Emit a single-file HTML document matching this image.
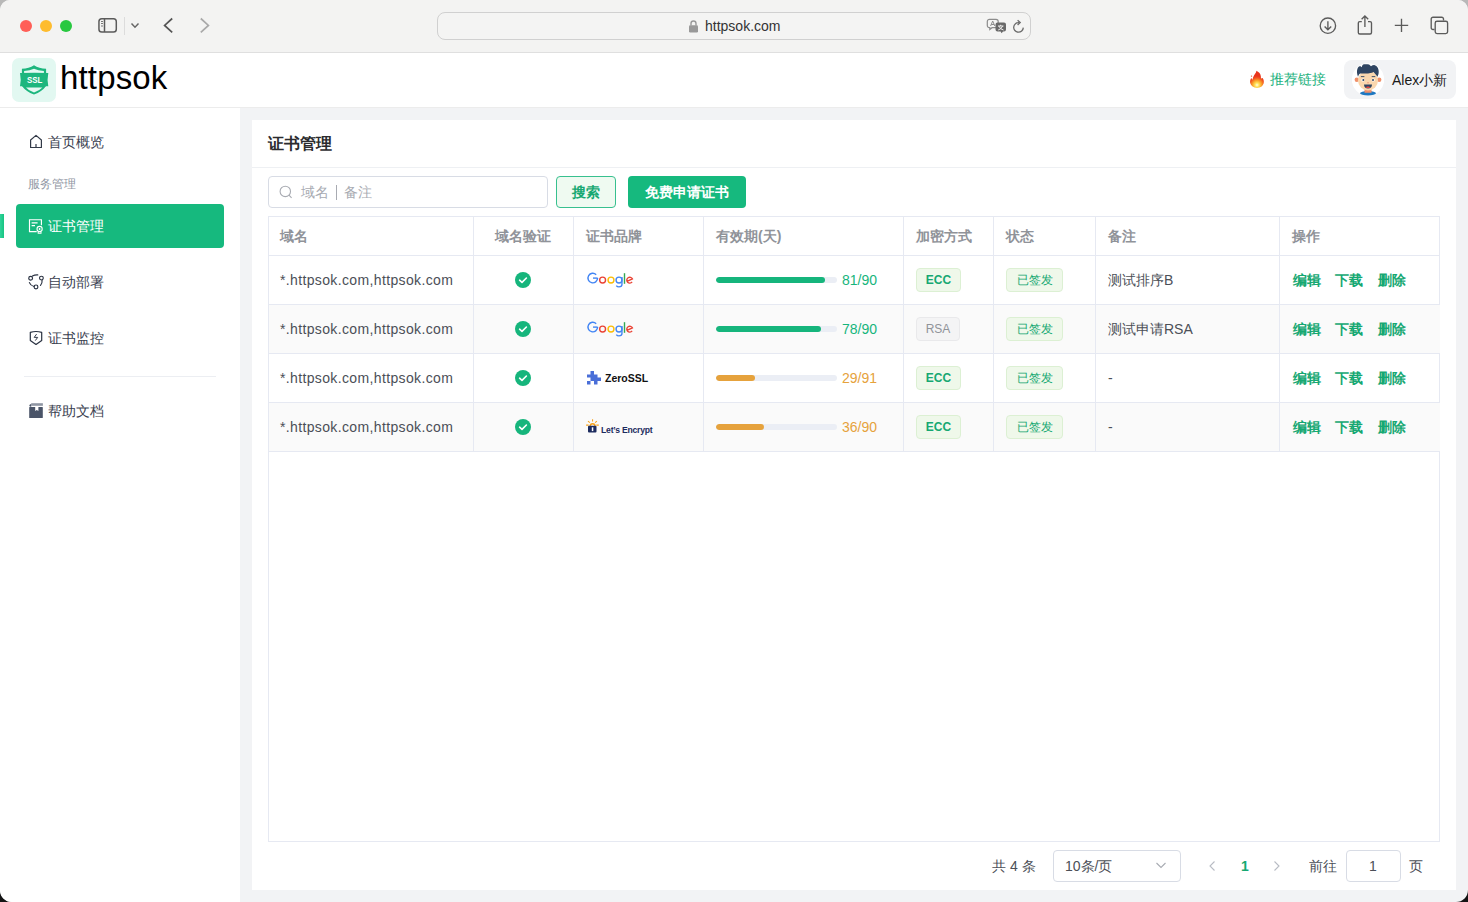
<!DOCTYPE html>
<html><head><meta charset="utf-8">
<style>
*{box-sizing:border-box;margin:0;padding:0}
html,body{width:1468px;height:902px;overflow:hidden;background:linear-gradient(#b8b8b8 0,#b8b8b8 450px,#141414 451px)}
body{font-family:"Liberation Sans",sans-serif;position:relative;color:#333}
.abs{position:absolute}
.t{position:absolute;white-space:nowrap;line-height:1}
#win{position:absolute;left:0;top:0;width:1468px;height:902px;border-radius:10px 10px 12px 12px;overflow:hidden;background:#f2f3f5}
#tb{position:absolute;left:0;top:0;width:1468px;height:53px;background:#f3f3f2;border-bottom:1px solid #dfdfdf}
.tl{position:absolute;top:20px;width:12px;height:12px;border-radius:50%}
#url{position:absolute;left:437px;top:12px;width:594px;height:28px;border:1px solid #d0d0d0;border-radius:8px;background:#f4f4f3}
#hdr{position:absolute;left:0;top:53px;width:1468px;height:55px;background:#fff;border-bottom:1px solid #ececec}
#side{position:absolute;left:0;top:108px;width:240px;height:794px;background:#fff}
#card{position:absolute;left:252px;top:120px;width:1204px;height:770px;background:#fff}
.nav{position:absolute;left:48px;font-size:14px;color:#3a4150}
.navic{position:absolute;left:28px;width:16px;height:16px}
.th{position:absolute;top:229px;font-size:14px;font-weight:bold;color:#909399}
.row{position:absolute;left:268px;width:1172px;height:49px;border-bottom:1px solid #e6e9f2}
.dom{position:absolute;left:280px;font-size:14px;color:#4b4f57;letter-spacing:0.36px}
.vl{position:absolute;top:216px;width:1px;height:235px;background:#e6e9f2}
.bar{position:absolute;left:716px;width:121px;height:6px;border-radius:3px;background:#ebeef5;overflow:hidden}
.bar i{position:absolute;left:0;top:0;height:6px;border-radius:3px;display:block}
.num{position:absolute;left:842px;font-size:14px}
.tag{position:absolute;height:24px;border-radius:4px;font-size:12px;line-height:22px;text-align:center}
.tg{background:#eff8ea;border:1px solid #dcf0d3;color:#16a872}
.act{position:absolute;font-size:14px;font-weight:bold;color:#16a872}
.chk{position:absolute;left:515px;width:16px;height:16px}
</style></head><body>
<div id="win">
  <!-- Safari toolbar -->
  <div id="tb">
    <div class="tl" style="left:20px;background:#ff5f57"></div>
    <div class="tl" style="left:40px;background:#febc2e"></div>
    <div class="tl" style="left:60px;background:#28c840"></div>
    <svg class="abs" style="left:96px;top:15px" width="24" height="21" viewBox="0 0 24 21">
      <rect x="2.95" y="3.65" width="17.35" height="13.4" rx="2.8" fill="none" stroke="#5b5b5b" stroke-width="1.5"/>
      <line x1="8.5" y1="3.65" x2="8.5" y2="17.05" stroke="#5b5b5b" stroke-width="1.5"/>
      <rect x="5" y="6" width="2" height="1" fill="#777"/><rect x="5" y="8" width="2" height="1" fill="#777"/><rect x="5" y="10.5" width="2" height="1" fill="#777"/>
    </svg>
    <div class="abs" style="left:124px;top:17px;width:1px;height:18px;background:#dcdcdc"></div>
    <svg class="abs" style="left:129px;top:21px" width="12" height="9" viewBox="0 0 12 9"><path d="M2.5 2.6 L6 6.2 L9.5 2.6" fill="none" stroke="#666" stroke-width="1.5"/></svg>
    <svg class="abs" style="left:160px;top:15px" width="16" height="21" viewBox="0 0 16 21"><path d="M12.2 3.5 L4.6 10.4 L12.2 17.3" fill="none" stroke="#555" stroke-width="1.7"/></svg>
    <svg class="abs" style="left:197px;top:15px" width="16" height="21" viewBox="0 0 16 21"><path d="M3.8 3.5 L11.4 10.4 L3.8 17.3" fill="none" stroke="#a9a9a9" stroke-width="1.7"/></svg>
    <div id="url"></div>
    <svg class="abs" style="left:688px;top:19px" width="11" height="14" viewBox="0 0 11 14"><path d="M3 6.5 V4.5 A2.5 2.5 0 0 1 8 4.5 V6.5" fill="none" stroke="#999" stroke-width="1.4"/><rect x="1" y="6.3" width="9" height="7.2" rx="1.3" fill="#999"/></svg>
    <div class="t" style="left:705px;top:19px;font-size:14px;color:#333">httpsok.com</div>
    <svg class="abs" style="left:986px;top:18px" width="22" height="17" viewBox="0 0 22 17">
      <path d="M3.5 1.3 H10 A2.2 2.2 0 0 1 12.2 3.5 V7.5 A2.2 2.2 0 0 1 10 9.7 H6 L3.8 11.5 V9.7 H3.5 A2.2 2.2 0 0 1 1.3 7.5 V3.5 A2.2 2.2 0 0 1 3.5 1.3 Z" fill="none" stroke="#8c8c8c" stroke-width="1.2"/>
      <path d="M4.6 8 L6.7 3 L8.8 8 M5.3 6.5 H8.1" fill="none" stroke="#8c8c8c" stroke-width="1"/>
      <path d="M11.5 4.6 H18 A2 2 0 0 1 20 6.6 V11.6 A2 2 0 0 1 18 13.6 H17 L15.6 15.2 L14.6 13.6 H11.5 A2 2 0 0 1 9.5 11.6 V6.6 A2 2 0 0 1 11.5 4.6 Z" fill="#696969"/>
      <path d="M12 8 H17.5 M14.7 6.8 V8 M12.8 8 Q14.5 11.5 17.5 12 M16.7 8 Q15.2 11.3 12.2 12" fill="none" stroke="#f3f2f1" stroke-width="0.95"/>
    </svg>
    <svg class="abs" style="left:1011px;top:18px" width="16" height="18" viewBox="0 0 16 18"><path d="M12.3 9.6 A4.8 4.8 0 1 1 8 4.6" fill="none" stroke="#6a6a6a" stroke-width="1.3"/><path d="M6.6 2.3 L9.2 4.6 L6.6 6.9" fill="none" stroke="#6a6a6a" stroke-width="1.3"/></svg>
    <!-- right icons -->
    <svg class="abs" style="left:1317px;top:15px" width="22" height="22" viewBox="0 0 22 22"><circle cx="10.9" cy="10.7" r="7.7" fill="none" stroke="#5b5b5b" stroke-width="1.35"/><path d="M10.9 6.2 V14.6 M7.6 11.4 L10.9 14.7 L14.2 11.4" fill="none" stroke="#5b5b5b" stroke-width="1.35"/></svg>
    <svg class="abs" style="left:1355px;top:13px" width="20" height="23" viewBox="0 0 20 23"><path d="M6.8 8.6 H4.8 A1.5 1.5 0 0 0 3.3 10.1 V19.5 A1.5 1.5 0 0 0 4.8 21 H15 A1.5 1.5 0 0 0 16.5 19.5 V10.1 A1.5 1.5 0 0 0 15 8.6 H13" fill="none" stroke="#5b5b5b" stroke-width="1.35"/><path d="M9.9 14 V3 M6.6 6.2 L9.9 2.9 L13.2 6.2" fill="none" stroke="#5b5b5b" stroke-width="1.35"/></svg>
    <svg class="abs" style="left:1393px;top:17px" width="17" height="17" viewBox="0 0 17 17"><path d="M8.5 1.8 V15 M1.8 8.4 H15.2" fill="none" stroke="#5b5b5b" stroke-width="1.35"/></svg>
    <svg class="abs" style="left:1429px;top:15px" width="21" height="21" viewBox="0 0 21 21"><path d="M5.5 14.5 H4 A1.8 1.8 0 0 1 2.2 12.7 V4 A1.8 1.8 0 0 1 4 2.2 H12.7 A1.8 1.8 0 0 1 14.5 4 V5.5" fill="none" stroke="#5b5b5b" stroke-width="1.35"/><rect x="6.2" y="6.2" width="12.4" height="12.4" rx="1.8" fill="none" stroke="#5b5b5b" stroke-width="1.35"/></svg>
  </div>

  <!-- App header -->
  <div id="hdr">
    <div class="abs" style="left:12px;top:5px;width:44px;height:44px;border-radius:7px;background:#e2f8f1"></div>
    <svg class="abs" style="left:12px;top:5px" width="44" height="44" viewBox="0 0 44 44">
      <path d="M9.9 10.8 Q17 10.6 22 7.2 Q27 10.6 34.1 10.8 V28 Q30 33.6 22 36.6 Q14 33.6 9.9 28 Z" fill="#1db67e"/>
      <path d="M12.1 15.2 V12.9 Q18 12.7 22 10.7 Q26 12.7 31.9 12.9 V15.2 Z" fill="#e6f9f3"/>
      <path d="M8 15 Q22 14.3 36.3 15 Q34.9 21.6 36.3 28.3 Q22 27.6 8 28.3 Q9.4 21.6 8 15 Z" fill="#1db67e"/>
      <path d="M14 29.6 H30.4 Q27.6 32.6 22 34.6 Q16.4 32.6 14 29.6 Z" fill="#e6f9f3"/>
      <text x="14.9" y="24.8" font-family="Liberation Sans" font-weight="bold" font-size="9.2" fill="#fff" textLength="15.3" lengthAdjust="spacingAndGlyphs">SSL</text>
    </svg>
    <div class="t" style="left:60px;top:8px;font-size:33px;color:#000;letter-spacing:0.15px">httpsok</div>
        <svg class="abs" style="left:1249px;top:17px" width="16" height="19" viewBox="0 0 16 19">
      <defs><radialGradient id="fg" cx="8" cy="15" r="9" gradientUnits="userSpaceOnUse"><stop offset="0" stop-color="#fffde8"/><stop offset="0.22" stop-color="#ffe45c"/><stop offset="0.5" stop-color="#fba32a"/><stop offset="0.8" stop-color="#f2521f"/><stop offset="1" stop-color="#e9341c"/></radialGradient></defs>
      <path d="M7.4 0.8 C9.5 2 11.6 3.5 11.8 6 L12 8.4 L13.6 7.9 C14.8 9.5 15.2 11.5 14.6 13.5 C13.8 16 11.5 17.9 8 17.9 C4.5 17.9 2 16 1.2 13 C0.8 11.3 1.3 9.5 2.2 8 L3.6 9.8 C3.8 7.5 4.8 5.8 5.6 4.6 C6.5 3.3 7.3 2.2 7.4 0.8 Z" fill="url(#fg)"/>
      <circle cx="2.5" cy="6.1" r="0.7" fill="#f04a1e"/>
    </svg>
    <div class="t" style="left:1270px;top:19px;font-size:14px;color:#1db27e">推荐链接</div>
    <div class="abs" style="left:1344px;top:7px;width:112px;height:39px;border-radius:8px;background:#f2f3f5"></div>
    <svg class="abs" style="left:1352px;top:10px" width="32" height="34" viewBox="0 0 32 34">
      <circle cx="16" cy="16.5" r="16.2" fill="#fff"/>
      <circle cx="4.8" cy="16.8" r="2.2" fill="#f0906a"/><circle cx="27.2" cy="16.8" r="2.2" fill="#f0906a"/>
      <path d="M12.5 24 H19.5 V29 H12.5 Z" fill="#f0906a"/>
      <ellipse cx="16" cy="30.3" rx="8" ry="2.2" fill="#1f78c1"/>
      <path d="M12.5 28 H19.5 V29.8 H12.5 Z" fill="#f0906a"/>
      <ellipse cx="16" cy="17.5" rx="10" ry="10" fill="#fad7ae"/>
      <path d="M6 13.7 C5 11 4.6 8.5 5.3 6.2 C5.8 4.6 6.8 3.3 8.1 3 L9.7 4.3 C10 3 10.5 1.8 11.1 1.4 C13 1.1 15.5 1.2 17.1 1.6 L19 3.2 C20 2.6 21 2.1 22.2 2.1 C23.8 2.8 25 3.5 25.6 4.6 C26.7 6.5 27 9 26.5 11 L25.5 13.7 C24.2 12 22.8 10.3 21.5 9 C19.5 10 17.5 10.4 16 10.4 L8.1 10.4 C7.2 11 6.5 12 6 13.7 Z" fill="#2f4562"/>
      <path d="M9.3 13.6 H12 M20.1 13.6 H22.9" stroke="#2f4562" stroke-width="0.9" stroke-linecap="round"/>
      <circle cx="11" cy="17" r="1.6" fill="#fff"/><circle cx="21.2" cy="17" r="1.6" fill="#fff"/>
      <circle cx="11.3" cy="17" r="1" fill="#2f4562"/><circle cx="21" cy="17" r="1" fill="#2f4562"/>
      <circle cx="16" cy="19.8" r="0.7" fill="#f08a70"/>
      <path d="M12 21.6 H20 C20 24 18.5 25.6 16 25.6 C13.5 25.6 12 24 12 21.6 Z" fill="#2f4562"/>
      <path d="M13.5 24.3 C14.5 23.2 17.5 23.2 18.5 24.3 C17.8 25.2 14.2 25.2 13.5 24.3 Z" fill="#e8413e"/>
    </svg>
    <div class="t" style="left:1392px;top:20px;font-size:14px;color:#1a1a1a">Alex小新</div>
  </div>

  <!-- Sidebar -->
  <div id="side"></div>
  <svg class="navic" style="left:28px;top:133px" width="16" height="16" viewBox="0 0 16 16"><path d="M2.6 14.5 V7 L8 2.4 L13.4 7 V14.5 Z M8 14.5 V11" fill="none" stroke="#333a48" stroke-width="1.2" stroke-linejoin="round"/></svg>
  <div class="t nav" style="top:135px">首页概览</div>
  <div class="t" style="left:28px;top:178px;font-size:12px;color:#8f96a3">服务管理</div>
  <div class="abs" style="left:0;top:214px;width:4px;height:24px;background:linear-gradient(90deg,#30d49a,#17c482)"></div>
  <div class="abs" style="left:16px;top:204px;width:208px;height:44px;border-radius:4px;background:#16b97e"></div>
  <svg class="navic" style="left:28px;top:218px" width="16" height="16" viewBox="0 0 16 16"><path d="M8.7 13.6 H1.5 V1.7 H13.4 V7.2" fill="none" stroke="#fff" stroke-width="1.15"/><path d="M3.6 4.8 H9.6 M3.6 7.6 H7" stroke="#fff" stroke-width="1.15"/><circle cx="11.6" cy="11" r="2.6" fill="none" stroke="#fff" stroke-width="1.1"/><circle cx="11.6" cy="11" r="0.9" fill="#fff"/><path d="M10.2 13.4 V15.2 H13 V13.4" fill="none" stroke="#fff" stroke-width="1.05"/></svg>
  <div class="t nav" style="top:219px;color:#fff">证书管理</div>
  <svg class="navic" style="left:28px;top:274px" width="16" height="16" viewBox="0 0 16 16"><circle cx="2.65" cy="4.25" r="1.9" fill="none" stroke="#2a3242" stroke-width="1.15"/><circle cx="13.4" cy="4.1" r="1.9" fill="none" stroke="#2a3242" stroke-width="1.15"/><circle cx="8" cy="12.9" r="1.9" fill="none" stroke="#2a3242" stroke-width="1.15"/><path d="M4.4 2 Q6.8 0.7 9.8 0.9 M1.4 8.6 Q2.4 11.4 6 12.5 M14.1 6.1 Q14.4 9.3 12.5 11.3" fill="none" stroke="#2a3242" stroke-width="1.15" stroke-linecap="round"/></svg>
  <div class="t nav" style="top:275px">自动部署</div>
  <svg class="navic" style="left:28px;top:330px" width="16" height="16" viewBox="0 0 16 16"><path d="M2.3 2.4 Q8 0.6 13.7 2.4 V10.4 L8 14.5 L2.3 10.4 Z" fill="none" stroke="#2a3242" stroke-width="1.2" stroke-linejoin="round"/><path d="M8.6 4.1 L6.2 7.4 H9.7 L7.3 10.6" fill="none" stroke="#2a3242" stroke-width="0.95" stroke-linejoin="round"/></svg>
  <div class="t nav" style="top:331px">证书监控</div>
  <div class="abs" style="left:24px;top:376px;width:192px;height:1px;background:#eceef2"></div>
  <svg class="navic" style="left:28px;top:403px" width="16" height="16" viewBox="0 0 16 16"><rect x="3.2" y="0.2" width="11.7" height="2.6" fill="#8f96a3"/><path d="M1.2 3 Q1.5 1 3.2 1 V3.9 Z" fill="#4a5468"/><rect x="1.2" y="3.9" width="13.6" height="11.1" rx="0.6" fill="#4a5468"/><path d="M7.2 3.9 H10.4 V8 L8.8 7 L7.2 8 Z" fill="#fff"/></svg>
  <div class="t nav" style="top:404px">帮助文档</div>

  <!-- Card -->
  <div id="card"></div>
  <div class="t" style="left:268px;top:136px;font-size:16px;color:#2b2b2e;font-weight:600">证书管理</div>
  <div class="abs" style="left:252px;top:167px;width:1204px;height:1px;background:#eef0f3"></div>
  <div class="abs" style="left:268px;top:176px;width:280px;height:32px;border:1px solid #d8dce5;border-radius:4px;background:#fff"></div>
  <svg class="abs" style="left:278px;top:184px" width="16" height="16" viewBox="0 0 16 16"><circle cx="7.3" cy="7.4" r="5.2" fill="none" stroke="#a8abb2" stroke-width="1.1"/><path d="M11 11.2 L13.6 13.8" stroke="#a8abb2" stroke-width="1.1"/></svg>
  <div class="t" style="left:301px;top:185px;font-size:14px;color:#a8abb2">域名</div><div class="abs" style="left:336px;top:185px;width:1px;height:15px;background:#a8abb2"></div><div class="t" style="left:344px;top:185px;font-size:14px;color:#a8abb2">备注</div>
  <div class="abs" style="left:556px;top:176px;width:60px;height:32px;border:1px solid #38c08f;border-radius:4px;background:#effaf1"></div>
  <div class="t" style="left:572px;top:185px;font-size:14px;color:#16a872;font-weight:bold">搜索</div>
  <div class="abs" style="left:628px;top:176px;width:118px;height:32px;border-radius:4px;background:#16b97e"></div>
  <div class="t" style="left:645px;top:185px;font-size:14px;color:#fff;font-weight:bold">免费申请证书</div>

  <!-- Table -->
  <div class="abs" style="left:268px;top:216px;width:1172px;height:626px;border:1px solid #e6e9f2;background:#fff"></div>
  <div class="row" style="top:216px;height:40px"></div>
  <div class="row" style="top:256px"></div>
  <div class="row" style="top:305px;background:#fafafa"></div>
  <div class="row" style="top:354px"></div>
  <div class="row" style="top:403px;background:#fafafa"></div>
  <div class="abs" style="left:268px;top:216px;width:1172px;height:1px;background:#e6e9f2"></div>
  <div class="abs" style="left:268px;top:216px;width:1px;height:626px;background:#e6e9f2"></div>
  <div class="vl" style="left:473px"></div>
  <div class="vl" style="left:573px"></div>
  <div class="vl" style="left:703px"></div>
  <div class="vl" style="left:903px"></div>
  <div class="vl" style="left:993px"></div>
  <div class="vl" style="left:1095px"></div>
  <div class="vl" style="left:1279px"></div>

  <div class="t th" style="left:280px">域名</div>
  <div class="t th" style="left:495px">域名验证</div>
  <div class="t th" style="left:586px">证书品牌</div>
  <div class="t th" style="left:716px">有效期(天)</div>
  <div class="t th" style="left:916px">加密方式</div>
  <div class="t th" style="left:1006px">状态</div>
  <div class="t th" style="left:1108px">备注</div>
  <div class="t th" style="left:1292px">操作</div>

  <!-- rows -->
  <div class="t dom" style="top:273px">*.httpsok.com,httpsok.com</div>
  <svg class="chk" style="top:272px" viewBox="0 0 16 16"><circle cx="8" cy="8" r="8" fill="#16b57c"/><path d="M4.6 8.2 L7 10.4 L11.4 6" fill="none" stroke="#fff" stroke-width="1.6" stroke-linecap="round" stroke-linejoin="round"/></svg>
  <svg class="abs" style="left:582px;top:266px" width="60" height="28" viewBox="0 0 60 28"><g fill="none" stroke-width="1.4"><path d="M14.19 8.66 A4.8 4.8 0 1 0 15.6 12.05" stroke="#4285f4"/><path d="M11 12.1 H15.6" stroke="#4285f4"/><circle cx="20.6" cy="14.1" r="2.95" stroke="#ea4335"/><circle cx="29" cy="14.1" r="2.95" stroke="#fbbc05"/><circle cx="37" cy="14.1" r="2.95" stroke="#4285f4"/><path d="M39.95 10.9 V18.6 Q39.95 20.9 37 20.9 Q35.2 20.9 34.3 19.6" stroke="#4285f4"/><path d="M42.5 7.2 V17.8" stroke="#34a853"/><path d="M45 15.3 L50.4 12.9 A2.95 2.95 0 1 0 50.1 15.9" stroke="#ea4335"/></g></svg>
  <div class="bar" style="top:277px"><i style="width:109px;background:#16b57c"></i></div>
  <div class="t num" style="top:273px;color:#16b57c">81/90</div>
  <div class="tag tg" style="left:916px;top:268px;width:45px;font-weight:bold">ECC</div>
  <div class="tag tg" style="left:1006px;top:268px;width:57px">已签发</div>
  <div class="t" style="left:1108px;top:273px;font-size:14px;color:#4b4f57">测试排序B</div>
  <div class="t act" style="left:1293px;top:273px">编辑</div>
  <div class="t act" style="left:1335px;top:273px">下载</div>
  <div class="t act" style="left:1378px;top:273px">删除</div>
  <div class="t dom" style="top:322px">*.httpsok.com,httpsok.com</div>
  <svg class="chk" style="top:321px" viewBox="0 0 16 16"><circle cx="8" cy="8" r="8" fill="#16b57c"/><path d="M4.6 8.2 L7 10.4 L11.4 6" fill="none" stroke="#fff" stroke-width="1.6" stroke-linecap="round" stroke-linejoin="round"/></svg>
  <svg class="abs" style="left:582px;top:315px" width="60" height="28" viewBox="0 0 60 28"><g fill="none" stroke-width="1.4"><path d="M14.19 8.66 A4.8 4.8 0 1 0 15.6 12.05" stroke="#4285f4"/><path d="M11 12.1 H15.6" stroke="#4285f4"/><circle cx="20.6" cy="14.1" r="2.95" stroke="#ea4335"/><circle cx="29" cy="14.1" r="2.95" stroke="#fbbc05"/><circle cx="37" cy="14.1" r="2.95" stroke="#4285f4"/><path d="M39.95 10.9 V18.6 Q39.95 20.9 37 20.9 Q35.2 20.9 34.3 19.6" stroke="#4285f4"/><path d="M42.5 7.2 V17.8" stroke="#34a853"/><path d="M45 15.3 L50.4 12.9 A2.95 2.95 0 1 0 50.1 15.9" stroke="#ea4335"/></g></svg>
  <div class="bar" style="top:326px"><i style="width:105px;background:#16b57c"></i></div>
  <div class="t num" style="top:322px;color:#16b57c">78/90</div>
  <div class="tag" style="left:916px;top:317px;width:44px;background:#f4f4f5;border:1px solid #e9e9eb;color:#909399">RSA</div>
  <div class="tag tg" style="left:1006px;top:317px;width:57px">已签发</div>
  <div class="t" style="left:1108px;top:322px;font-size:14px;color:#4b4f57">测试申请RSA</div>
  <div class="t act" style="left:1293px;top:322px">编辑</div>
  <div class="t act" style="left:1335px;top:322px">下载</div>
  <div class="t act" style="left:1378px;top:322px">删除</div>
  <div class="t dom" style="top:371px">*.httpsok.com,httpsok.com</div>
  <svg class="chk" style="top:370px" viewBox="0 0 16 16"><circle cx="8" cy="8" r="8" fill="#16b57c"/><path d="M4.6 8.2 L7 10.4 L11.4 6" fill="none" stroke="#fff" stroke-width="1.6" stroke-linecap="round" stroke-linejoin="round"/></svg>
  <svg class="abs" style="left:586px;top:370px" width="16" height="16" viewBox="0 0 16 16"><path d="M4.5 1 H8 V4.5 H11.5 V7.5 H15 V11 H11.5 V14.5 H8 V11 H4.5 V7.5 H1 V4.5 H4.5 Z" fill="#4a6fd8"/><rect x="1" y="11" width="3.5" height="3.5" fill="#4a6fd8"/></svg><div class="t" style="left:605px;top:373px;font-size:10.5px;font-weight:bold;color:#111">ZeroSSL</div>
  <div class="bar" style="top:375px"><i style="width:39px;background:#e6a23c"></i></div>
  <div class="t num" style="top:371px;color:#e6a23c">29/91</div>
  <div class="tag tg" style="left:916px;top:366px;width:45px;font-weight:bold">ECC</div>
  <div class="tag tg" style="left:1006px;top:366px;width:57px">已签发</div>
  <div class="t" style="left:1108px;top:371px;font-size:14px;color:#4b4f57">-</div>
  <div class="t act" style="left:1293px;top:371px">编辑</div>
  <div class="t act" style="left:1335px;top:371px">下载</div>
  <div class="t act" style="left:1378px;top:371px">删除</div>
  <div class="t dom" style="top:420px">*.httpsok.com,httpsok.com</div>
  <svg class="chk" style="top:419px" viewBox="0 0 16 16"><circle cx="8" cy="8" r="8" fill="#16b57c"/><path d="M4.6 8.2 L7 10.4 L11.4 6" fill="none" stroke="#fff" stroke-width="1.6" stroke-linecap="round" stroke-linejoin="round"/></svg>
  <svg class="abs" style="left:586px;top:419px" width="14" height="15" viewBox="0 0 14 15"><path d="M6.57 0.3 V2.5 M2 2.15 L3.8 3.7 M10.9 2.15 L9.1 3.7 M0.1 6.1 H2.6 M10.3 6.1 H12.8" stroke="#f7a21b" stroke-width="1.05"/><path d="M4.2 7.2 A2.4 2.4 0 0 1 9 7.2" fill="none" stroke="#f7a21b" stroke-width="1.5"/><rect x="2" y="6.75" width="8.5" height="6.8" rx="1" fill="#1c2b5e"/><rect x="5.8" y="8.3" width="1.5" height="3.8" fill="#fff"/></svg><div class="t" style="left:601px;top:426px;font-size:8.6px;font-weight:bold;letter-spacing:-0.2px;color:#1c2b5e">Let&#8217;s Encrypt</div>
  <div class="bar" style="top:424px"><i style="width:48px;background:#e6a23c"></i></div>
  <div class="t num" style="top:420px;color:#e6a23c">36/90</div>
  <div class="tag tg" style="left:916px;top:415px;width:45px;font-weight:bold">ECC</div>
  <div class="tag tg" style="left:1006px;top:415px;width:57px">已签发</div>
  <div class="t" style="left:1108px;top:420px;font-size:14px;color:#4b4f57">-</div>
  <div class="t act" style="left:1293px;top:420px">编辑</div>
  <div class="t act" style="left:1335px;top:420px">下载</div>
  <div class="t act" style="left:1378px;top:420px">删除</div>
  <div class="t" style="left:992px;top:859px;font-size:14px;color:#4b4f57">共 4 条</div>
  <div class="abs" style="left:1053px;top:850px;width:128px;height:32px;border:1px solid #d8dce5;border-radius:4px;background:#fff"></div>
  <div class="t" style="left:1065px;top:859px;font-size:14px;color:#4b4f57">10条/页</div>
  <svg class="abs" style="left:1154px;top:858px" width="14" height="14" viewBox="0 0 14 14"><path d="M2.5 5 L7 9.5 L11.5 5" fill="none" stroke="#a8abb2" stroke-width="1.1"/></svg>
  <svg class="abs" style="left:1206px;top:859px" width="12" height="14" viewBox="0 0 12 14"><path d="M8.5 2.5 L4 7 L8.5 11.5" fill="none" stroke="#b8bcc4" stroke-width="1.1"/></svg>
  <div class="t" style="left:1241px;top:859px;font-size:14px;color:#16a872;font-weight:bold">1</div>
  <svg class="abs" style="left:1271px;top:859px" width="12" height="14" viewBox="0 0 12 14"><path d="M3.5 2.5 L8 7 L3.5 11.5" fill="none" stroke="#b8bcc4" stroke-width="1.1"/></svg>
  <div class="t" style="left:1309px;top:859px;font-size:14px;color:#4b4f57">前往</div>
  <div class="abs" style="left:1346px;top:850px;width:55px;height:32px;border:1px solid #d8dce5;border-radius:4px;background:#fff"></div>
  <div class="t" style="left:1369px;top:859px;font-size:14px;color:#4b4f57">1</div>
  <div class="t" style="left:1409px;top:859px;font-size:14px;color:#4b4f57">页</div>

</div>
</body></html>
